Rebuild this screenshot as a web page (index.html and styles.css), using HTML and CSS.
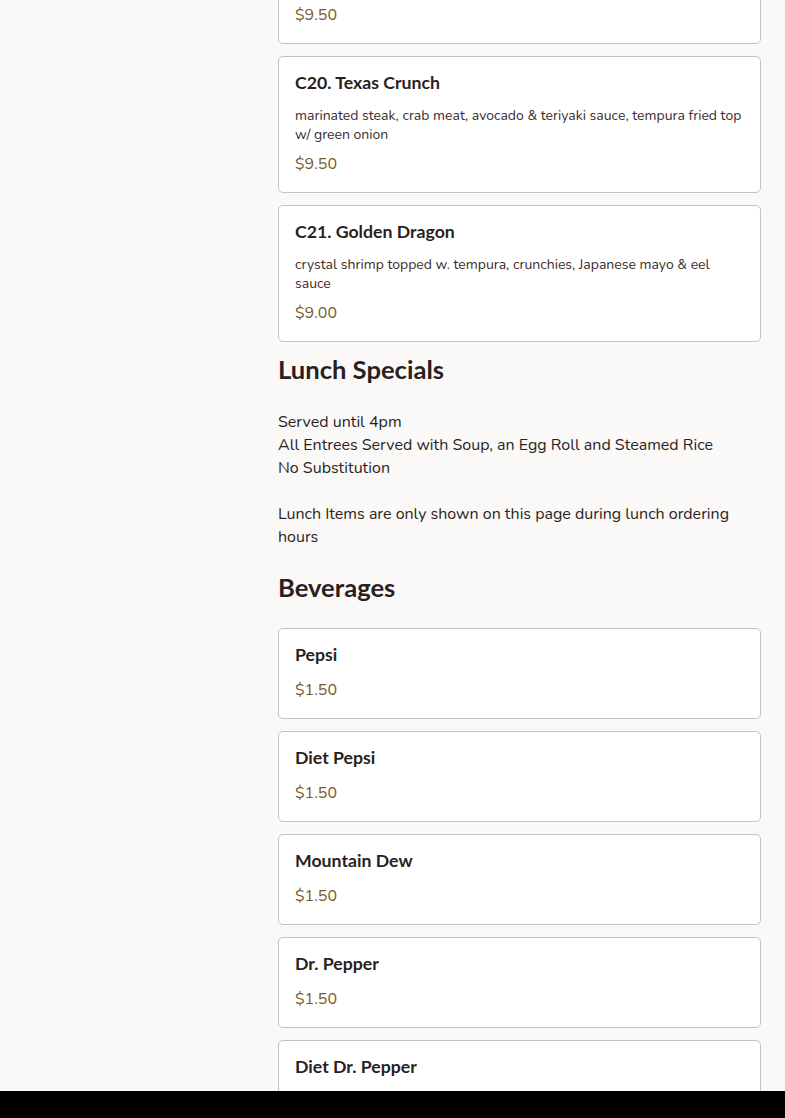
FILE: index.html
```html
<!DOCTYPE html>
<html lang="en">
<head>
<meta charset="utf-8">
<title>Menu</title>
<link rel="stylesheet" href="styles.css">
</head>
<body>
<div class="page">
  <aside class="sidebar"></aside>
  <main class="menu">
    <section class="section">
      <div class="items">
        <div class="card">
          <h3 class="item-name">C19. Rainbow Roll</h3>
          <p class="item-desc">crab meat, avocado &amp; cucumber topped w. assorted fish, tuna, salmon &amp; white fish</p>
          <div class="price">$9.50</div>
        </div>
        <div class="card">
          <h3 class="item-name">C20. Texas Crunch</h3>
          <p class="item-desc">marinated steak, crab meat, avocado &amp; teriyaki sauce, tempura fried top w/ green onion</p>
          <div class="price">$9.50</div>
        </div>
        <div class="card">
          <h3 class="item-name">C21. Golden Dragon</h3>
          <p class="item-desc">crystal shrimp topped w. tempura, crunchies, Japanese mayo &amp; eel sauce</p>
          <div class="price">$9.00</div>
        </div>
      </div>
    </section>
    <section class="section">
      <h2 class="section-title">Lunch Specials</h2>
      <p class="section-note">Served until 4pm<br>All Entrees Served with Soup, an Egg Roll and Steamed Rice<br>No Substitution<br><br>Lunch Items are only shown on this page during lunch ordering hours</p>
    </section>
    <section class="section">
      <h2 class="section-title">Beverages</h2>
      <div class="items">
        <div class="card">
          <h3 class="item-name">Pepsi</h3>
          <div class="price">$1.50</div>
        </div>
        <div class="card">
          <h3 class="item-name">Diet Pepsi</h3>
          <div class="price">$1.50</div>
        </div>
        <div class="card">
          <h3 class="item-name">Mountain Dew</h3>
          <div class="price">$1.50</div>
        </div>
        <div class="card">
          <h3 class="item-name">Dr. Pepper</h3>
          <div class="price">$1.50</div>
        </div>
        <div class="card">
          <h3 class="item-name">Diet Dr. Pepper</h3>
          <div class="price">$1.50</div>
        </div>
        <div class="card">
          <h3 class="item-name">Sierra Mist</h3>
          <div class="price">$1.50</div>
        </div>
      </div>
    </section>
  </main>
</div>
<div class="bottom-bar"></div>
</body>
</html>
```
FILE: styles.css
```css
* { box-sizing: border-box; }
html, body {
  margin: 0;
  padding: 0;
  background: #faf9f7;
  height: 100%;
  overflow: hidden;
}
body {
  font-family: "Nunito", "Lato", "Noto Sans", sans-serif;
  color: #2a1f1e;
}
.page {
  display: flex;
  padding-right: 24px;
}
.sidebar {
  width: 278px;
  flex: none;
}
.menu {
  flex: 1;
  min-width: 0;
  margin-top: -93px;
  display: flex;
  flex-direction: column;
}
.section { display: flex; flex-direction: column; }
.items {
  display: flex;
  flex-direction: column;
  gap: 12px;
}
.card {
  background: #fff;
  border: 1px solid #c6c2be;
  border-radius: 5px;
  padding: 16px 16px 17px;
  display: flex;
  flex-direction: column;
}
.item-name {
  margin: 0;
  font-family: "Lato", sans-serif;
  font-size: 17.7px;
  line-height: 20px;
  font-weight: 700;
  color: #2a1f1e;
}
.item-desc {
  margin: 13px 0 0;
  font-size: 14px;
  line-height: 19px;
  color: #3a2d2b;
}
.price {
  margin-top: 9px;
  font-size: 16px;
  line-height: 22px;
  color: #76592a;
}
.item-name + .price { margin-top: 14px; }
.section-title {
  margin: 12px 0 26px;
  font-family: "Lato", sans-serif;
  font-size: 25.6px;
  line-height: 30px;
  font-weight: 700;
  color: #2a1f1e;
}
.section-note {
  margin: 1px 0 11px;
  font-size: 16px;
  line-height: 23px;
  color: #2a1f1e;
}
.bottom-bar {
  position: fixed;
  left: 0;
  right: 0;
  bottom: 0;
  height: 27px;
  background: #000;
}
```
